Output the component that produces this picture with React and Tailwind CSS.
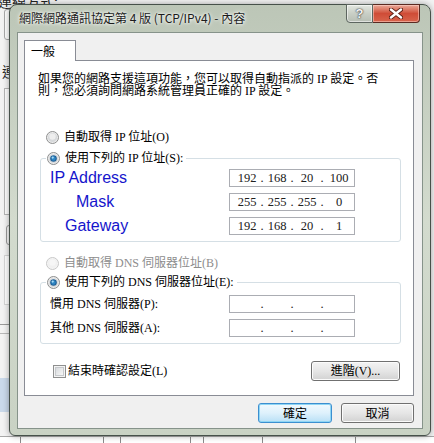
import React from 'react'

const ming = "font-['Liberation_Serif','Noto_Sans_CJK_TC',serif]"

function Radio({ checked = false, disabled = false }) {
  return (
    <svg width="13" height="13" viewBox="0 0 13 13" className="shrink-0">
      <circle cx="6.5" cy="6.5" r="6" fill={disabled ? '#f4f4f4' : '#ececec'} stroke={disabled ? '#c8c8c8' : '#8e8f8f'} />
      <circle cx="6.5" cy="6.5" r="4.6" fill={disabled ? '#f0f0f0' : '#d6d8da'} />
      <circle cx="6.5" cy="5.6" r="3.2" fill={disabled ? '#f6f6f6' : '#eeeeee'} />
      {checked && (
        <>
          <circle cx="6.5" cy="6.5" r="3.3" fill="#1f5f95" />
          <circle cx="6.5" cy="6.5" r="2.2" fill="#2f86c4" />
          <circle cx="5.7" cy="5.6" r="1.1" fill="#a9dcf5" />
        </>
      )}
    </svg>
  )
}

function Checkbox() {
  return (
    <div className="flex h-[13px] w-[13px] shrink-0 items-center justify-center border border-[#8e8f8f] bg-[#f4f4f4]">
      <div className="h-[9px] w-[9px] border border-[#c6c9cc] bg-linear-to-br from-[#d8dbde] to-[#f7f7f7]" />
    </div>
  )
}

function IpField({ octets }) {
  return (
    <div className={`flex h-[18px] w-[126px] items-center border border-[#abadb3] bg-white pl-[4px] text-[12.5px] leading-none text-[#202020] ${ming}`}>
      {octets.map((o, i) => (
        <React.Fragment key={i}>
          {i > 0 && <span className="w-[4px] text-center">.</span>}
          <span className={i === 3 ? 'w-[30px] text-center' : 'w-[26px] text-center'}>{o}</span>
        </React.Fragment>
      ))}
    </div>
  )
}

function WinButton({ children, width, primary = false }) {
  return (
    <button
      className={
        primary
          ? `flex h-[20px] items-center justify-center rounded-[3px] border border-[#3c8fd0] bg-linear-to-b from-[#f2fafe] via-[#def1fc] to-[#b9e0f6] text-[12px] leading-none text-black shadow-[inset_0_0_0_1px_#8fd6f5] ${width}`
          : `flex h-[20px] items-center justify-center rounded-[3px] border border-[#707070] bg-linear-to-b from-[#f3f3f3] via-[#e6e6e6] to-[#d2d2d2] text-[12px] leading-none text-black shadow-[inset_0_0_0_1px_#fbfbfb] ${width}`
      }
    >
      {children}
    </button>
  )
}

function Backdrop() {
  return (
    <div className="absolute inset-0 bg-[#f3f3f3]">
      <span className="absolute left-[-2px] top-[-9px] text-[14px] text-[#222] font-['Noto_Sans_CJK_TC',sans-serif]">連線方式:</span>
      <div className="absolute left-[4px] top-[9px] h-[31px] w-[20px] rounded-[3px] border border-[#a9a9a9] bg-white" />
      <span className="absolute left-[2px] top-[64px] text-[14px] leading-none text-[#222] font-['Noto_Sans_CJK_TC',sans-serif]">連</span>
      <div className="absolute left-[4px] top-[88px] h-[127px] w-[20px] border border-[#b5b5b5] bg-white" />
      <div className="absolute left-[6px] top-[225px] h-[20px] w-[20px] rounded-[3px] border border-[#9a9a9a] bg-[#f6f6f6]" />
      <div className="absolute left-[4px] top-[255px] h-[50px] w-[20px] border border-[#d6d6d6] bg-white" />
      <div className="absolute left-0 top-[324px] h-px w-[20px] bg-[#9a9a9a]" />
      <div className="absolute left-0 top-[333px] h-px w-[20px] bg-[#b8b8b8]" />
      <div className="absolute left-0 top-[378px] h-[34px] w-[20px] bg-[#cad9ea]" />
      <div className="absolute left-0 top-[436px] h-[7px] w-[434px] border-t border-[#a8a8a8] bg-white">
        {[20, 103, 120, 190, 203, 262, 355].map((x) => (
          <div key={x} className="absolute top-0 h-[7px] w-px bg-[#8a8a8a]" style={{ left: x }} />
        ))}
      </div>
    </div>
  )
}

export default function App() {
  return (
    <div className="relative flex h-[443px] w-[434px] items-start overflow-hidden pl-[9px] pt-[4px] text-black font-['Noto_Sans_CJK_TC',sans-serif]">
      <Backdrop />

      <div className="relative flex w-[422px] flex-col rounded-t-[8px] rounded-b-[6px] border border-[#46514a] bg-linear-to-b from-[#bcc6b7] via-[#d3dbce] to-[#c9d2c4] pb-[6px] shadow-[0_0_6px_rgba(0,0,0,0.35)]">
        {/* title bar */}
        <div className="flex h-[27px] items-start justify-between pl-[9px] pr-[10px]">
          <span className="mt-[6px] text-[12px] leading-[14px] text-[#1c1c1c] [text-shadow:0_0_5px_#fff,0_0_3px_#fff] font-['Noto_Sans_CJK_TC','Liberation_Sans',sans-serif]">
            網際網路通訊協定第 4 版 (TCP/IPv4) - 內容
          </span>
          <div className="-mt-px flex h-[19px]">
            <div className="flex w-[27px] items-center justify-center rounded-bl-[4px] border border-[#5d6660] bg-linear-to-b from-[#e3e7e1] via-[#c9cfc6] to-[#b7beb4] shadow-[inset_0_0_0_1px_rgba(255,255,255,0.55)]">
              <span className="text-[13px] font-bold leading-none text-[#f4f4f4] [text-shadow:0_0_1px_#333,0_0_2px_#333] font-['Liberation_Sans',sans-serif]">?</span>
            </div>
            <div className="flex w-[47px] items-center justify-center rounded-br-[4px] border border-l-0 border-[#5a2a22] bg-linear-to-b from-[#e9a898] via-[#cf4c37] to-[#d8644c] shadow-[inset_0_0_0_1px_rgba(255,220,210,0.5)]">
              <svg width="14" height="11" viewBox="0 0 14 11">
                <path d="M2 1.5 L12 9.5 M12 1.5 L2 9.5" stroke="#5a1e14" strokeWidth="4.2" strokeLinecap="round" />
                <path d="M2 1.5 L12 9.5 M12 1.5 L2 9.5" stroke="#ffffff" strokeWidth="2.4" strokeLinecap="round" />
              </svg>
            </div>
          </div>
        </div>

        {/* client area */}
        <div className="mx-[7px] flex flex-col border border-[#86938a] bg-[#f0f0f0] pb-[5px] pl-[6px] pr-[8px] pt-[7px]">
          <div className="relative z-10 -mb-px flex h-[21px] w-[52px] items-center border border-b-0 border-[#898c95] bg-white pl-[6px] text-[12px] leading-none">
            一般
          </div>

          <div className={`flex w-[390px] flex-col border border-[#898c95] bg-white pb-[14px] text-[12px] ${ming}`}>
            <p className="whitespace-nowrap pl-[13px] pt-[12px] leading-[12px]">
              如果您的網路支援這項功能，您可以取得自動指派的 IP 設定。否
              <br />
              則，您必須詢問網路系統管理員正確的 IP 設定。
            </p>

            <div className="ml-[21px] mt-[33px] flex h-[14px] items-center gap-[5px] leading-none">
              <Radio />
              <span>自動取得 IP 位址(O)</span>
            </div>

            <fieldset className="ml-[15px] mt-[7px] w-[361px] rounded-[3px] border border-[#d5dfe5] pb-[6px] pl-[5px] pr-[6px]">
              <legend className="flex h-[14px] items-center gap-[5px] pl-px pr-[3px] leading-none">
                <Radio checked />
                <span>使用下列的 IP 位址(S):</span>
              </legend>
              <div className="mt-[4px] flex flex-col gap-[6px]">
                <div className="flex h-[18px] items-center">
                  <span className="w-[183px] pl-[4px] text-[16px] leading-none text-[#1515cc] font-['Liberation_Sans',sans-serif]">IP Address</span>
                  <IpField octets={['192', '168', '20', '100']} />
                </div>
                <div className="flex h-[18px] items-center">
                  <span className="w-[183px] pl-[30px] text-[16px] leading-none text-[#1515cc] font-['Liberation_Sans',sans-serif]">Mask</span>
                  <IpField octets={['255', '255', '255', '0']} />
                </div>
                <div className="flex h-[18px] items-center">
                  <span className="w-[183px] pl-[19px] text-[16px] leading-none text-[#1515cc] font-['Liberation_Sans',sans-serif]">Gateway</span>
                  <IpField octets={['192', '168', '20', '1']} />
                </div>
              </div>
            </fieldset>

            <div className="ml-[21px] mt-[14px] flex h-[14px] items-center gap-[5px] leading-none text-[#8d8d8d]">
              <Radio disabled />
              <span>自動取得 DNS 伺服器位址(B)</span>
            </div>

            <fieldset className="ml-[15px] mt-[5px] w-[361px] rounded-[3px] border border-[#d5dfe5] pb-[6px] pl-[5px] pr-[6px]">
              <legend className="flex h-[14px] items-center gap-[5px] pl-px pr-[3px] leading-none">
                <Radio checked />
                <span>使用下列的 DNS 伺服器位址(E):</span>
              </legend>
              <div className="mt-[6px] flex flex-col gap-[6px]">
                <div className="flex h-[18px] items-center">
                  <span className="w-[183px] pl-[4px] leading-none">慣用 DNS 伺服器(P):</span>
                  <IpField octets={['', '', '', '']} />
                </div>
                <div className="flex h-[18px] items-center">
                  <span className="w-[183px] pl-[4px] leading-none">其他 DNS 伺服器(A):</span>
                  <IpField octets={['', '', '', '']} />
                </div>
              </div>
            </fieldset>

            <div className="ml-[28px] mr-[13px] mt-[17px] flex items-center justify-between">
              <div className="flex items-center gap-[2px] leading-none">
                <Checkbox />
                <span>結束時確認設定(L)</span>
              </div>
              <WinButton width="w-[89px]">進階(V)...</WinButton>
            </div>
          </div>

          <div className="mt-[7px] flex justify-end gap-[9px] pr-0">
            <WinButton width="w-[74px]" primary>確定</WinButton>
            <WinButton width="w-[73px]">取消</WinButton>
          </div>
        </div>
      </div>
    </div>
  )
}
